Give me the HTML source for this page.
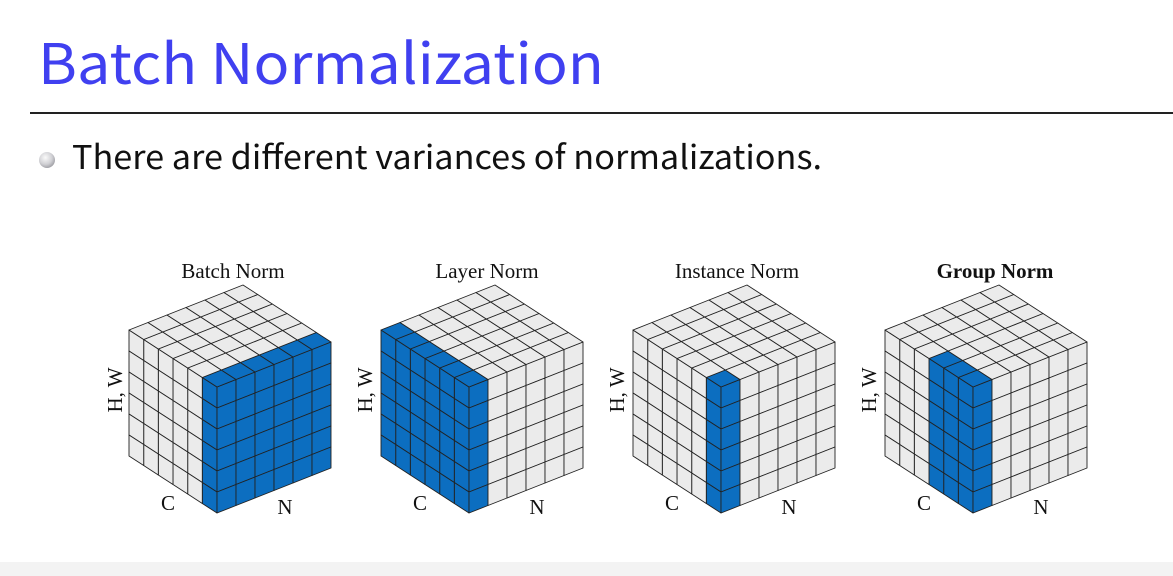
<!DOCTYPE html>
<html><head><meta charset="utf-8"><style>
html,body{margin:0;padding:0;background:#fff;width:1173px;height:576px;overflow:hidden}
svg{display:block}
</style></head><body>
<svg id="s" width="1173" height="576" viewBox="0 0 1173 576" xmlns="http://www.w3.org/2000/svg">
<rect x="0" y="0" width="1173" height="576" fill="#fff"/>
<rect x="0" y="562" width="1173" height="14" fill="#f3f3f3"/>
<text x="38" y="84" font-family="Noto Sans CJK KR, Liberation Sans, sans-serif" font-size="56" fill="#4040f0" textLength="566" lengthAdjust="spacingAndGlyphs">Batch Normalization</text>
<rect x="30" y="112" width="1143" height="2" fill="#222"/>
<defs><radialGradient id="bg" cx="0.4" cy="0.35" r="0.7"><stop offset="0" stop-color="#fafafa"/><stop offset="0.6" stop-color="#d0d0d4"/><stop offset="1" stop-color="#9a9aa0"/></radialGradient></defs>
<circle cx="47" cy="160" r="8" fill="url(#bg)"/>
<text x="72" y="169" font-family="Noto Sans CJK KR, Liberation Sans, sans-serif" font-size="33" fill="#111" textLength="750" lengthAdjust="spacingAndGlyphs">There are different variances of normalizations.</text>
<g font-family="Liberation Serif, serif" font-size="21" fill="#111" text-anchor="middle">
<text x="233" y="278">Batch Norm</text>
<text x="487" y="278">Layer Norm</text>
<text x="737" y="278">Instance Norm</text>
<text x="995" y="278" font-weight="bold">Group Norm</text>
<text x="168" y="510">C</text><text x="285" y="514">N</text>
<text x="420" y="510">C</text><text x="537" y="514">N</text>
<text x="672" y="510">C</text><text x="789" y="514">N</text>
<text x="924" y="510">C</text><text x="1041" y="514">N</text>
<text transform="translate(122,390) rotate(-90)">H, W</text>
<text transform="translate(372,390) rotate(-90)">H, W</text>
<text transform="translate(624,390) rotate(-90)">H, W</text>
<text transform="translate(876,390) rotate(-90)">H, W</text>
</g>
<g id="cubes"></g>
</svg>
<script>
var g=document.getElementById('cubes');
var c=[-88/6,-57/6], n=[114/6,-45/6], h=21, BL='#0c6ec0', GR='#ebebeb';
var rules=[
 {L:function(i){return i==0},R:function(k){return true},T:function(i,k){return i==0}},
 {L:function(i){return true},R:function(k){return k==0},T:function(i,k){return k==0}},
 {L:function(i){return i==0},R:function(k){return k==0},T:function(i,k){return i==0&&k==0}},
 {L:function(i){return i<3},R:function(k){return k==0},T:function(i,k){return i<3&&k==0}}
];
var fx=[217,469,721,973], fy=387, out='';
function poly(pts,col){out+='<polygon points="'+pts.map(function(p){return p[0].toFixed(1)+','+p[1].toFixed(1)}).join(' ')+'" fill="'+col+'" stroke="#222" stroke-width="0.9" stroke-linejoin="round"/>';}
for(var q=0;q<4;q++){
 var F=[fx[q],fy], r=rules[q];
 for(var i=0;i<6;i++)for(var j=0;j<6;j++){
  var P=[F[0]+i*c[0],F[1]+i*c[1]+j*h];
  poly([P,[P[0]+c[0],P[1]+c[1]],[P[0]+c[0],P[1]+c[1]+h],[P[0],P[1]+h]],r.L(i)?BL:GR);
 }
 for(var k=0;k<6;k++)for(var j=0;j<6;j++){
  var P=[F[0]+k*n[0],F[1]+k*n[1]+j*h];
  poly([P,[P[0]+n[0],P[1]+n[1]],[P[0]+n[0],P[1]+n[1]+h],[P[0],P[1]+h]],r.R(k)?BL:GR);
 }
 for(var i=0;i<6;i++)for(var k=0;k<6;k++){
  var P=[F[0]+i*c[0]+k*n[0],F[1]+i*c[1]+k*n[1]];
  poly([P,[P[0]+c[0],P[1]+c[1]],[P[0]+c[0]+n[0],P[1]+c[1]+n[1]],[P[0]+n[0],P[1]+n[1]]],r.T(i,k)?BL:GR);
 }
}
g.innerHTML=out;
</script>
</body></html>
